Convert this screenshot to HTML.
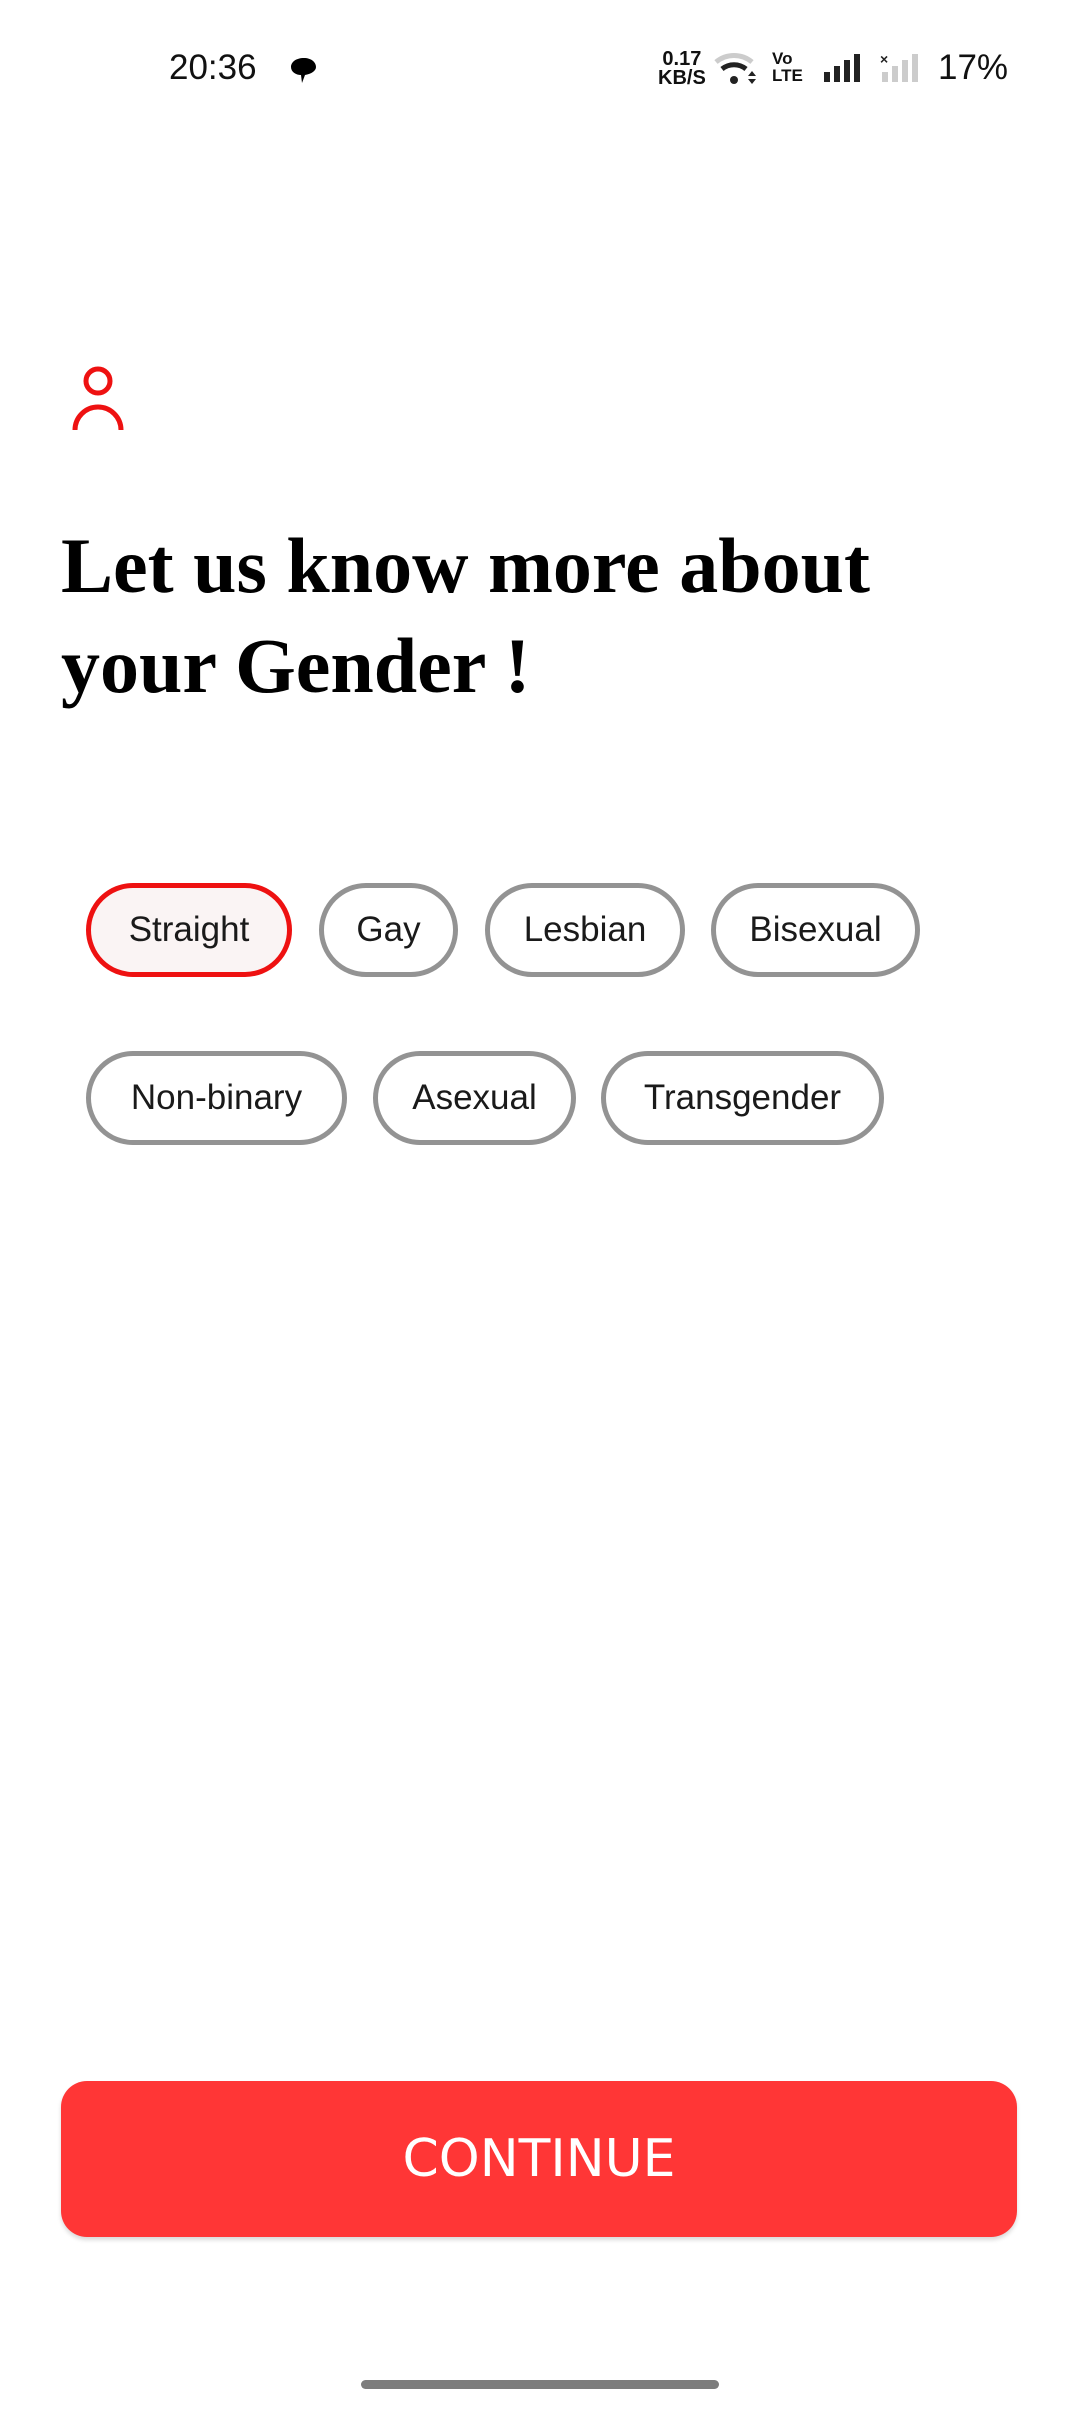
<!DOCTYPE html>
<html><head><meta charset="utf-8"><style>
html,body{margin:0;padding:0;background:#fff;}
body{width:1080px;height:2412px;position:relative;overflow:hidden;font-family:"Liberation Sans",sans-serif;}
.abs{position:absolute;}
.chip{position:absolute;box-sizing:border-box;height:94px;border:5px solid #939393;border-radius:47px;font-size:35px;color:#1a1a1a;display:flex;align-items:center;justify-content:center;background:#fff;}
.sel{border-color:#ee1111;background:#faf4f4;}
h1{position:absolute;left:61px;top:516px;margin:0;font-family:"Liberation Serif",serif;font-weight:bold;font-size:78px;line-height:100px;color:#000;}
</style></head><body>
<div class="abs" style="left:169px;top:48px;font-size:35px;color:#111;">20:36</div>
<svg class="abs" style="left:288px;top:56px" width="32" height="30" viewBox="0 0 32 30"><path d="M16 2C8 2 3 6 3 11c0 5 5 8 10 8l1 8 3-8c6-1 11-4 11-8 0-5-5-9-12-9z" fill="#000"/></svg>
<div class="abs" style="left:658px;top:50px;font-size:20px;line-height:19px;color:#111;font-weight:bold;text-align:center;">0.17<br>KB/S</div>
<svg class="abs" style="left:712px;top:50px" width="48" height="36" viewBox="0 0 48 36"><path d="M4 12a28 28 0 0 1 36 0" stroke="#ccc" stroke-width="5" fill="none"/><path d="M10 19a19 19 0 0 1 24 0" stroke="#222" stroke-width="5" fill="none"/><circle cx="22" cy="30" r="4" fill="#222"/><path d="M36 26l4-5 4 5zM36 29l4 5 4-5z" fill="#222"/></svg>
<div class="abs" style="left:772px;top:50px;font-size:17px;line-height:17px;font-weight:bold;color:#111;">Vo<br>LTE</div>
<svg class="abs" style="left:822px;top:52px" width="100" height="32" viewBox="0 0 100 32"><rect x="2" y="20" width="6" height="10" fill="#222"/><rect x="12" y="14" width="6" height="16" fill="#222"/><rect x="22" y="8" width="6" height="22" fill="#222"/><rect x="32" y="2" width="6" height="28" fill="#222"/><text x="58" y="12" font-size="14" font-weight="bold" fill="#222" font-family="Liberation Sans">×</text><rect x="60" y="20" width="6" height="10" fill="#ccc"/><rect x="70" y="14" width="6" height="16" fill="#ccc"/><rect x="80" y="8" width="6" height="22" fill="#ccc"/><rect x="90" y="2" width="6" height="28" fill="#ccc"/></svg>
<div class="abs" style="left:938px;top:48px;font-size:35px;color:#111;">17%</div>

<svg class="abs" style="left:70px;top:364px" width="56" height="68" viewBox="0 0 56 68"><circle cx="28" cy="17" r="12" stroke="#ee1111" stroke-width="5" fill="none"/><path d="M5 66a23 23 0 0 1 46 0" stroke="#ee1111" stroke-width="5" fill="none"/></svg>

<h1>Let us know more about<br>your Gender !</h1>

<div class="chip sel" style="left:86px;top:883px;width:206px;">Straight</div>
<div class="chip" style="left:319px;top:883px;width:139px;">Gay</div>
<div class="chip" style="left:485px;top:883px;width:200px;">Lesbian</div>
<div class="chip" style="left:711px;top:883px;width:209px;">Bisexual</div>
<div class="chip" style="left:86px;top:1051px;width:261px;">Non-binary</div>
<div class="chip" style="left:373px;top:1051px;width:203px;">Asexual</div>
<div class="chip" style="left:601px;top:1051px;width:283px;">Transgender</div>

<div class="abs" style="left:61px;top:2081px;width:956px;height:156px;background:#ff3636;border-radius:26px;box-shadow:0 3px 4px rgba(0,0,0,0.15);color:#fff;font-family:'DejaVu Sans',sans-serif;font-size:52px;display:flex;align-items:center;justify-content:center;">CONTINUE</div>
<div class="abs" style="left:361px;top:2380px;width:358px;height:9px;background:#7d7d7d;border-radius:5px;"></div>
</body></html>
